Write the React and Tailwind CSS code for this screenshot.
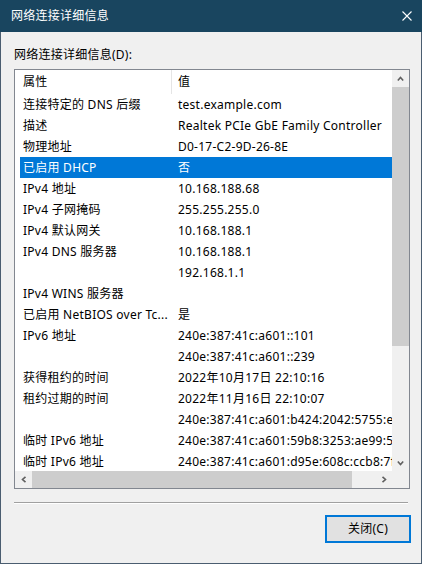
const rows = [
  ["连接特定的 DNS 后缀", "test.example.com"],
  ["描述", "Realtek PCIe GbE Family Controller"],
  ["物理地址", "D0-17-C2-9D-26-8E"],
  ["已启用 DHCP", "否", true],
  ["IPv4 地址", "10.168.188.68"],
  ["IPv4 子网掩码", "255.255.255.0"],
  ["IPv4 默认网关", "10.168.188.1"],
  ["IPv4 DNS 服务器", "10.168.188.1"],
  ["", "192.168.1.1"],
  ["IPv4 WINS 服务器", ""],
  ["已启用 NetBIOS over Tc...", "是"],
  ["IPv6 地址", "240e:387:41c:a601::101"],
  ["", "240e:387:41c:a601::239"],
  ["获得租约的时间", "2022年10月17日 22:10:16"],
  ["租约过期的时间", "2022年11月16日 22:10:07"],
  ["", "240e:387:41c:a601:b424:2042:5755:ec1d"],
  ["临时 IPv6 地址", "240e:387:41c:a601:59b8:3253:ae99:50c2"],
  ["临时 IPv6 地址", "240e:387:41c:a601:d95e:608c:ccb8:7f3a"],
];

function Chevron({ dir }) {
  const pts = {
    up: "0.8,4.5 3.5,1.5 6.2,4.5",
    down: "0.8,1.5 3.5,4.5 6.2,1.5",
    left: "4.5,0.8 1.5,3.5 4.5,6.2",
    right: "1.5,0.8 4.5,3.5 1.5,6.2",
  }[dir];
  const vert = dir === "up" || dir === "down";
  return (
    <svg width={vert ? 7 : 6} height={vert ? 6 : 7} viewBox={vert ? "0 0 7 6" : "0 0 6 7"}>
      <polyline points={pts} fill="none" stroke="#606060" strokeWidth="1.6" />
    </svg>
  );
}

export default function App() {
  return (
    <div className="w-[422px] h-[564px] flex flex-col bg-[#f0f0f0] text-[12px] leading-[16px] tracking-[0.25px] text-black font-['Noto_Sans','Noto_Sans_CJK_SC',sans-serif] overflow-hidden">
      <div className="h-[32px] shrink-0 bg-[#19455f] flex items-center justify-between pl-[11px] pr-[10px] text-white">
        <span>网络连接详细信息</span>
        <svg width="10" height="10" viewBox="0 0 10 10">
          <path d="M0.5 0.5 L9.5 9.5 M9.5 0.5 L0.5 9.5" stroke="#ffffff" strokeWidth="1.1" />
        </svg>
      </div>
      <div className="flex-1 flex flex-col border-l border-r border-b border-[#4a5d70] pl-[13px]">
        <div className="pt-[15px] mb-[6px]">网络连接详细信息(D):</div>
        <div className="w-[396px] h-[420px] border border-[#828790] bg-white flex flex-col">
          <div className="flex flex-1 min-h-0">
            <div className="flex-1 min-w-0 overflow-hidden flex flex-col">
              <div className="h-[24px] shrink-0 flex items-center">
                <div className="w-[157px] h-full pl-[8px] flex items-center border-r border-[#e5e5e5]">属性</div>
                <div className="pl-[6px]">值</div>
              </div>
              <div className="pl-[5px] flex flex-col">
                {rows.map(([a, b, sel], i) => (
                  <div
                    key={i}
                    className={
                      "h-[21px] shrink-0 flex items-center whitespace-nowrap overflow-hidden " +
                      (sel ? "bg-[#0078d7] text-white" : "")
                    }
                  >
                    <div className="w-[152px] shrink-0 pl-[3px] overflow-hidden">{a}</div>
                    <div className="pl-[6px] shrink-0">{b}</div>
                  </div>
                ))}
              </div>
            </div>
            <div className="w-[17px] shrink-0 bg-[#f0f0f0] flex flex-col">
              <div className="h-[17px] shrink-0 flex items-center justify-center">
                <Chevron dir="up" />
              </div>
              <div className="h-[259px] shrink-0 bg-[#cdcdcd]" />
              <div className="flex-1" />
              <div className="h-[17px] shrink-0 flex items-center justify-center">
                <Chevron dir="down" />
              </div>
            </div>
          </div>
          <div className="h-[17px] shrink-0 flex">
            <div className="flex-1 bg-[#f0f0f0] flex">
              <div className="w-[17px] shrink-0 flex items-center justify-center">
                <Chevron dir="left" />
              </div>
              <div className="w-[320px] shrink-0 bg-[#cdcdcd]" />
              <div className="flex-1" />
              <div className="w-[17px] shrink-0 flex items-center justify-center">
                <Chevron dir="right" />
              </div>
            </div>
            <div className="w-[17px] shrink-0 bg-[#f0f0f0]" />
          </div>
        </div>
        <div className="mt-[13px] w-[394px] h-[2px] border-t border-[#a0a0a0] border-b border-b-white" />
        <div className="mt-[11px] w-[397px] flex justify-end">
          <button className="w-[86px] h-[28px] border-2 border-[#0078d7] bg-[#e1e1e1] flex items-center justify-center text-[12px] leading-[16px]">
            关闭(C)
          </button>
        </div>
      </div>
    </div>
  );
}
